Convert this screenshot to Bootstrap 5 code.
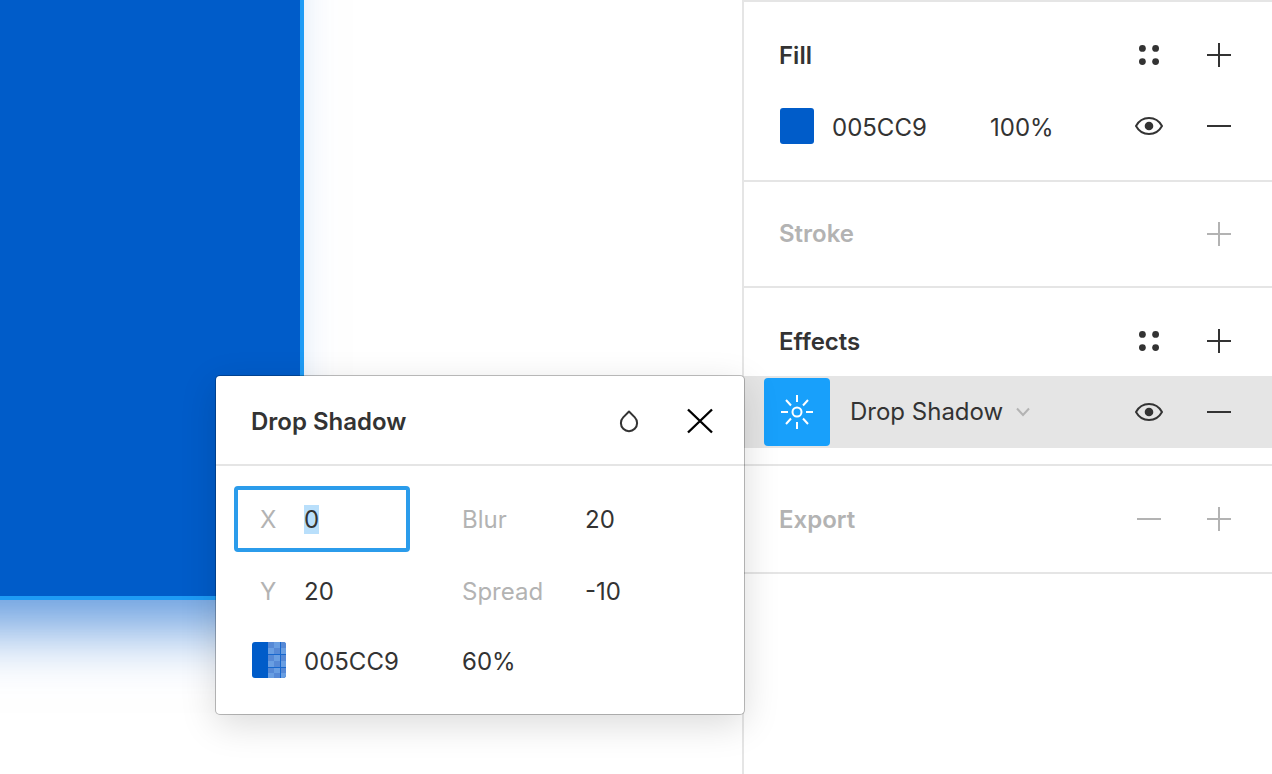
<!DOCTYPE html>
<html lang="en">
<head>
<meta charset="utf-8">
<meta name="viewport" content="width=device-width, initial-scale=1">
<title>Drop Shadow</title>
<link href="https://cdn.jsdelivr.net/npm/bootstrap@5.3.0/dist/css/bootstrap.min.css" rel="stylesheet">
<style>
  :root { --ink: #333; --muted: #b3b3b3; --line: #e5e5e5; --accent: #18a0fb; --fill: #005cc9; }
  body { font: 24px/30px Inter, sans-serif; color: var(--ink); background: #fff; }
  h2, h3 { font-size: 24px; line-height: 30px; font-weight: 600; margin: 0; padding-top: 2px; }

  /* Canvas */
  .shape { top: -200px; left: -200px; width: 502px; height: 798px; background: var(--fill);
    outline: 4px solid #1e9bf5; outline-offset: -2px; box-shadow: 0 64px 56px -32px rgba(0, 92, 201, .6); }

  /* Sidebar */
  .inspector { width: 530px; border-left: 2px solid var(--line); }
  .section { border-bottom: 2px solid var(--line); padding: 17px 0; }
  .section-tight { padding: 16px 0; }
  .section:first-child { border-top: 2px solid var(--line); }
  .section-effects { padding: 17px 0 16px; }
  .section-effects .prop:first-child { height: 71px; }
  .prop { height: 72px; padding: 0 18px 0 35px; }
  .prop-selected { background: var(--line); padding-left: 20px; }
  .dim { color: var(--muted); }
  .tool { width: 70px; height: 66px; padding: 0; border: 0; background: none; color: inherit;
    display: flex; align-items: center; justify-content: center; }
  .prop-fill .tool { padding-bottom: 2px; }
  .tool-active { width: 66px; height: 68px; border-radius: 4px; background: var(--accent); color: #fff; }
  .swatch { width: 34px; height: 36px; border: 0; padding: 0; margin: 0 18px 2px 1px; border-radius: 3px; background: var(--fill); overflow: hidden; display: flex; flex-shrink: 0; }
  .value { border: 0; padding: 0; background: none; color: var(--ink); height: 30px; min-width: 0; outline: 0; }
  .value::selection { background: #b9dffb; color: var(--ink); }
  input.value { height: 31px; padding-top: 1px; }
  .w-hex { width: 158px; flex-shrink: 0; }
  .w-num { width: 90px; }
  .kind { appearance: none; width: 166px; margin-left: 20px; }

  /* Floating settings panel */
  .panel { top: 376px; right: 100%; width: 528px; border-radius: 4px; background: #fff;
    box-shadow: 0 0 0 1px rgba(0, 0, 0, .25), 0 10px 36px rgba(0, 0, 0, .15); }
  .panel-head { height: 90px; border-bottom: 2px solid var(--line); padding: 2px 9px 0 35px; }
  .panel-body { padding: 17px 18px 19px; display: grid; grid-template-columns: 176px 1fr; column-gap: 52px; grid-template-rows: 72px 72px 68px; align-items: center; }
  .field { height: 66px; border: 4px solid transparent; border-radius: 4px; padding-left: 22px; }
  .field:focus-within { border-color: #2b9ceb; }
  .field label, .field-wide label { color: var(--muted); padding-top: 2px; }
  .field label { width: 44px; }
  .field-wide label { width: 123px; }
  .field-color { padding-left: 17px; }
</style>
</head>
<body>
<svg class="d-none">
  <symbol id="plus" viewBox="0 0 24 24"><path d="M12 0v24M0 12h24" stroke="currentColor" stroke-width="2"/></symbol>
  <symbol id="minus" viewBox="0 0 24 24"><path d="M0 12h24" stroke="currentColor" stroke-width="2"/></symbol>
  <symbol id="dots" viewBox="0 0 24 24"><g fill="currentColor"><circle cx="5.400" cy="5.400" r="3.400"/><circle cx="18.600" cy="5.400" r="3.400"/><circle cx="5.400" cy="18.600" r="3.400"/><circle cx="18.600" cy="18.600" r="3.400"/></g></symbol>
  <symbol id="eye" viewBox="0 0 28 20"><path d="M1 10C4 4.500 8.500 2 14 2s10 2.500 13 8c-3 5.500-7.500 8-13 8S4 15.500 1 10z" fill="none" stroke="currentColor" stroke-width="2" stroke-linejoin="round"/><circle cx="14" cy="10" r="4.300" fill="currentColor"/></symbol>
</svg>

<div class="d-flex min-vh-100 position-relative overflow-hidden">
  <main class="flex-grow-1 position-relative" aria-label="Canvas">
    <div class="shape position-absolute"></div>
  </main>

  <aside class="inspector flex-shrink-0 position-relative">
    <section class="section">
      <div class="prop d-flex align-items-center">
        <h2 class="flex-grow-1">Fill</h2>
        <button class="tool" aria-label="Styles"><svg width="24" height="24"><use href="#dots"/></svg></button>
        <button class="tool" aria-label="Add fill"><svg width="24" height="24"><use href="#plus"/></svg></button>
      </div>
      <div class="prop prop-fill d-flex align-items-center">
        <button class="swatch" aria-label="Fill colour"></button>
        <input class="value w-hex" aria-label="Fill hex" value="005CC9">
        <input class="value w-num" aria-label="Fill opacity" value="100%">
        <button class="tool ms-auto" aria-label="Toggle fill"><svg width="28" height="20"><use href="#eye"/></svg></button>
        <button class="tool" aria-label="Remove fill"><svg width="24" height="24"><use href="#minus"/></svg></button>
      </div>
    </section>

    <section class="section section-tight">
      <div class="prop d-flex align-items-center dim">
        <h2 class="flex-grow-1 pt-0">Stroke</h2>
        <button class="tool" aria-label="Add stroke"><svg width="24" height="24"><use href="#plus"/></svg></button>
      </div>
    </section>

    <section class="section section-effects">
      <div class="prop d-flex align-items-center">
        <h2 class="flex-grow-1">Effects</h2>
        <button class="tool" aria-label="Styles"><svg width="24" height="24"><use href="#dots"/></svg></button>
        <button class="tool" aria-label="Add effect"><svg width="24" height="24"><use href="#plus"/></svg></button>
      </div>
      <div class="prop prop-selected d-flex align-items-center">
        <button class="tool tool-active" aria-label="Effect settings">
          <svg width="34" height="36" viewBox="0 0 34 36" fill="none" stroke="currentColor" stroke-width="2"><circle cx="17" cy="18" r="4.500"/><path d="M17 1v7M17 28v7M1 18h7M26 18h7M6 6l5 5.500M28 6l-5 5.500M6 30l5-5.500M28 30l-5-5.500"/></svg>
        </button>
        <select class="value kind" aria-label="Effect type"><option>Drop Shadow</option><option>Inner Shadow</option></select>
        <svg class="dim" width="14" height="10" viewBox="0 0 14 10" fill="none" stroke="currentColor" stroke-width="2"><path d="M1 1.500l6 6.500 6-6.500"/></svg>
        <button class="tool ms-auto" aria-label="Toggle effect"><svg width="28" height="20"><use href="#eye"/></svg></button>
        <button class="tool" aria-label="Remove effect"><svg width="24" height="24"><use href="#minus"/></svg></button>
      </div>
    </section>

    <section class="section">
      <div class="prop d-flex align-items-center dim">
        <h2 class="flex-grow-1">Export</h2>
        <button class="tool" aria-label="Remove export"><svg width="24" height="24"><use href="#minus"/></svg></button>
        <button class="tool" aria-label="Add export"><svg width="24" height="24"><use href="#plus"/></svg></button>
      </div>
    </section>

    <div class="panel position-absolute" role="dialog" aria-labelledby="panel-title">
      <div class="panel-head d-flex align-items-center">
        <h3 class="flex-grow-1" id="panel-title">Drop Shadow</h3>
        <button class="tool" aria-label="Blend mode"><svg width="22" height="24" viewBox="0 0 22 24" fill="none" stroke="currentColor" stroke-width="2"><path d="M10 2.500L4.200 8.400a8.100 8.100 0 1 0 11.600 0z" stroke-linejoin="round"/></svg></button>
        <button class="tool text-black" aria-label="Close"><svg width="26" height="26" viewBox="0 0 26 26" stroke="currentColor" stroke-width="2.400"><path d="M1 1.500l24 23M25 1.500l-24 23"/></svg></button>
      </div>
      <div class="panel-body">
        <div class="field d-flex align-items-center"><label for="x">X</label><input class="value w-num" id="x" value="0" autofocus></div>
        <div class="field-wide d-flex align-items-center"><label for="blur">Blur</label><input class="value w-num" id="blur" value="20"></div>
        <div class="field d-flex align-items-center"><label for="y">Y</label><input class="value w-num" id="y" value="20"></div>
        <div class="field-wide d-flex align-items-center"><label for="spread">Spread</label><input class="value w-num" id="spread" value="-10"></div>
        <div class="field-color d-flex align-items-center">
          <button class="swatch" aria-label="Shadow colour">
            <svg class="ms-auto" width="18" height="36" viewBox="0 0 18 36"><path fill="#699ee2" d="M0 0h18v36H0z"/><path fill="#5689d6" d="M0 0h6v6H0zM13 0h5v6h-5zM6 6h6v6H6zM0 13h6v6H0zM13 13h5v6h-5zM6 19h6v6H6zM0 26h6v5H0zM13 26h5v5h-5zM6 31h6v5H6z"/><path stroke="#1767cd" d="M12.500 0v36M0 12.500h18M0 25.500h18"/></svg>
          </button>
          <input class="value w-hex" aria-label="Shadow hex" value="005CC9">
        </div>
        <input class="value w-num" aria-label="Shadow opacity" value="60%">
      </div>
    </div>
  </aside>
</div>
<script src="https://cdn.jsdelivr.net/npm/bootstrap@5.3.0/dist/js/bootstrap.bundle.min.js"></script>
<script>
  const x = document.getElementById('x');
  x.focus();
  x.select();
</script>
</body>
</html>
